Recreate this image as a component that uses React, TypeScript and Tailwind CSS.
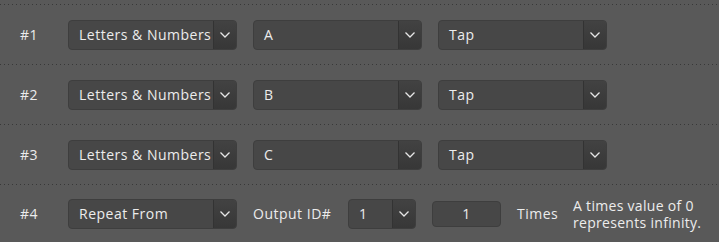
import React from "react";

const Chevron = () => (
  <svg width="12" height="8" viewBox="0 0 12 8" fill="none">
    <path d="M1.5 1.5 L6 6 L10.5 1.5" stroke="#e6e6e6" strokeWidth="1.3" />
  </svg>
);

const Select = ({ value, width }: { value: string; width: string }) => (
  <div
    className={`${width} h-[30px] flex rounded-[4px] bg-[#474747] border border-[#3e3e3e] overflow-hidden`}
  >
    <div className="flex-1 flex items-center pl-[10px] text-[14px] text-[#ececec] whitespace-nowrap overflow-hidden">
      {value}
    </div>
    <div className="w-[23px] flex items-center justify-center bg-[linear-gradient(#424242,#373737)] border-l border-[#333]">
      <Chevron />
    </div>
  </div>
);

const Divider = () => (
  <div className="h-px bg-[linear-gradient(to_right,#383838_1px,transparent_1px)] bg-[length:4px_1px]" />
);

export default function App() {
  const rows = [
    { id: "#1", key: "A" },
    { id: "#2", key: "B" },
    { id: "#3", key: "C" },
  ];

  return (
    <div className="w-[719px] h-[242px] bg-[#595959] pt-[4px] overflow-hidden font-['Open_Sans',sans-serif] tracking-[0.5px] text-[#ececec]">
      {rows.map((r) => (
        <div key={r.id}>
          <Divider />
          <div className="h-[59px] flex items-center pl-[20px]">
            <div className="w-[48px] text-[14px]">{r.id}</div>
            <Select value="Letters & Numbers" width="w-[169px]" />
            <div className="w-[16px]" />
            <Select value={r.key} width="w-[169px]" />
            <div className="w-[16px]" />
            <Select value="Tap" width="w-[169px]" />
          </div>
        </div>
      ))}
      <Divider />
      <div className="h-[57px] flex items-center pl-[20px] text-[14px]">
        <div className="w-[48px]">#4</div>
        <Select value="Repeat From" width="w-[169px]" />
        <div className="ml-[16px] w-[95px] whitespace-nowrap">Output ID#</div>
        <Select value="1" width="w-[68px]" />
        <div className="ml-[16px] w-[69px] h-[26px] rounded-[4px] bg-[#474747] border border-[#3e3e3e] flex items-center justify-center">
          1
        </div>
        <div className="ml-[16px] w-[56px]">Times</div>
        <div className="leading-[17px] tracking-[0.3px] whitespace-nowrap">
          <div>A times value of 0</div>
          <div>represents infinity.</div>
        </div>
      </div>
    </div>
  );
}
